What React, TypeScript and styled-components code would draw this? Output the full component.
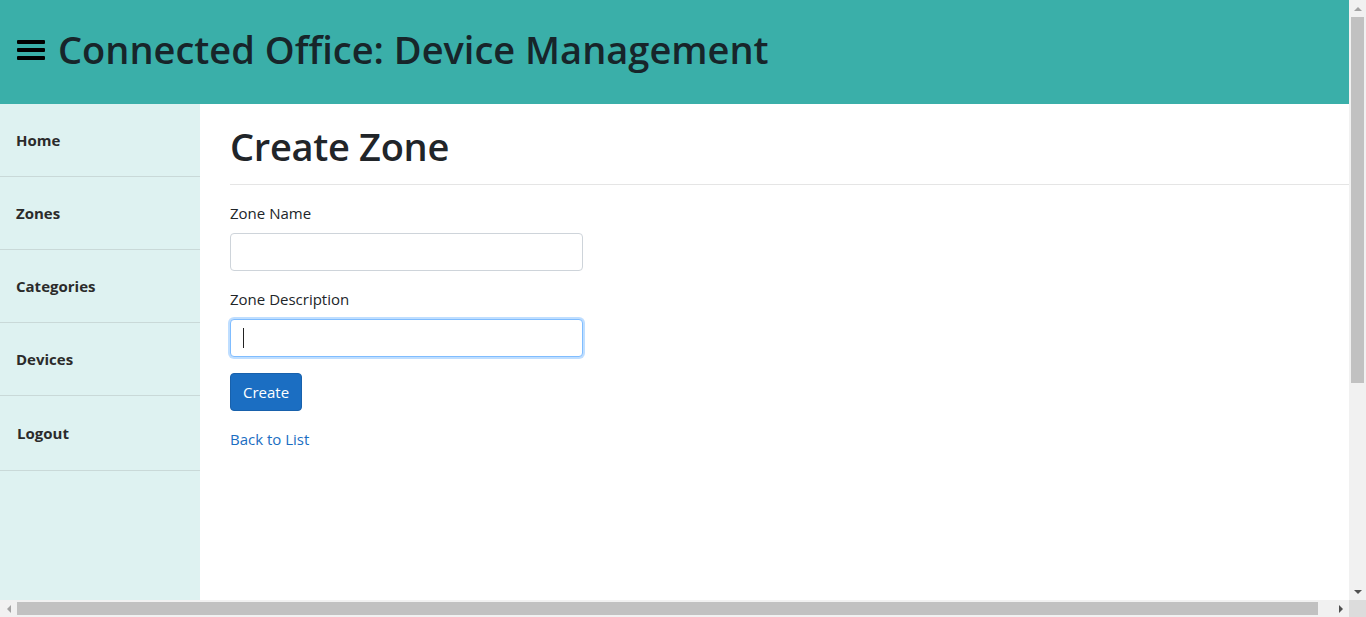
import React from 'react';
import styled, { createGlobalStyle } from 'styled-components';

const GlobalStyle = createGlobalStyle`
  html, body { margin: 0; padding: 0; overflow: hidden; }
  body {
    font-family: "Open Sans", "Noto Sans", "Liberation Sans", sans-serif;
    color: #212529;
    background: #ffffff;
  }
  * { box-sizing: border-box; }
`;

/* ---------- window frame with scrollbars ---------- */

const Viewport = styled.div`
  width: 1366px;
  height: 617px;
  display: grid;
  grid-template-columns: 1349px 17px;
  grid-template-rows: 600px 17px;
  background: #f1f1f1;
`;

const Scroller = styled.div`
  overflow: hidden;
  background: #fff;
`;

const VBar = styled.div`
  display: flex;
  flex-direction: column;
  background: #f1f1f1;
`;

const HBar = styled.div`
  display: flex;
  background: #f1f1f1;
`;

const Corner = styled.div`
  background: #dcdcdc;
`;

const ArrowButton = styled.div`
  width: 17px;
  height: 17px;
  flex-shrink: 0;
  display: flex;
  align-items: center;
  justify-content: center;
`;

type Dir = 'up' | 'down' | 'left' | 'right';

const Tri = styled.span<{ $dir: Dir; $active?: boolean }>`
  width: 0;
  height: 0;
  border-style: solid;
  ${(p) => {
    const c = p.$active ? '#505050' : '#a3a3a3';
    switch (p.$dir) {
      case 'up':
        return `border-width: 0 4px 4px 4px; border-color: transparent transparent ${c} transparent;`;
      case 'down':
        return `border-width: 4px 4px 0 4px; border-color: ${c} transparent transparent transparent;`;
      case 'left':
        return `border-width: 4px 4px 4px 0; border-color: transparent ${c} transparent transparent;`;
      default:
        return `border-width: 4px 0 4px 4px; border-color: transparent transparent transparent ${c};`;
    }
  }}
`;

const VTrack = styled.div`
  flex: 1;
  padding: 0 2px;
`;

const HTrack = styled.div`
  flex: 1;
  padding: 2px 0;
`;

const Thumb = styled.div`
  background: #c1c1c1;
  width: 100%;
  height: 100%;
`;

/* ---------- page ---------- */

const Page = styled.div`
  width: 1364px;
  min-height: 923px;
  display: flex;
  flex-direction: column;
`;

const Header = styled.header`
  height: 104px;
  background: #3aafa9;
  display: flex;
  align-items: center;
  padding: 0 0 4px 17px;
  gap: 13px;
`;

const Burger = styled.button`
  width: 28px;
  height: 20px;
  padding: 0;
  border: 0;
  background: transparent;
  display: flex;
  flex-direction: column;
  justify-content: space-between;
  cursor: pointer;
  span {
    display: block;
    height: 4px;
    border-radius: 1px;
    background: #000;
  }
`;

const Title = styled.h1`
  margin: 0;
  font-size: 38px;
  font-weight: 600;
  line-height: 1.2;
  color: #17252a;
  letter-spacing: 0;
`;

const Body = styled.div`
  flex: 1;
  display: flex;
`;

const Sidebar = styled.nav`
  width: 200px;
  flex-shrink: 0;
  background: #def2f1;
  display: flex;
  flex-direction: column;
`;

const NavItem = styled.a<{ $tall?: boolean; $indent?: number }>`
  display: flex;
  align-items: center;
  height: ${(p) => (p.$tall ? 75 : 73)}px;
  padding-left: ${(p) => p.$indent ?? 16}px;
  border-bottom: 1px solid #c9d9d8;
  font-size: 15px;
  font-weight: 700;
  color: #2b2b2b;
  text-decoration: none;
  cursor: pointer;
`;

const Main = styled.main`
  flex: 1;
  padding: 18px 0 0 30px;
`;

const PageTitle = styled.h2`
  margin: 0;
  font-size: 38px;
  font-weight: 600;
  line-height: 48px;
  color: #212529;
  letter-spacing: -0.3px;
`;

const Rule = styled.hr`
  margin: 14px 0 16px;
  border: 0;
  border-top: 1px solid #e5e5e5;
`;

const Field = styled.div`
  margin-bottom: 16px;
`;

const Label = styled.label`
  display: block;
  font-size: 15px;
  line-height: 24px;
  margin-bottom: 8px;
`;

const InputWrap = styled.div`
  position: relative;
  width: 353px;
`;

const Input = styled.input<{ $focused?: boolean }>`
  display: block;
  width: 353px;
  height: 38px;
  padding: 6px 12px;
  font: inherit;
  font-size: 16px;
  color: #495057;
  background: #fff;
  border: 1px solid ${(p) => (p.$focused ? '#80bdff' : '#ced4da')};
  border-radius: 4px;
  outline: none;
  box-shadow: ${(p) => (p.$focused ? '0 0 0 2px rgba(0, 123, 255, 0.25)' : 'none')};
`;

const Caret = styled.span`
  position: absolute;
  left: 13px;
  top: 9px;
  width: 1px;
  height: 20px;
  background: #222;
`;

const Button = styled.button`
  height: 38px;
  padding: 0 12px;
  font: inherit;
  font-size: 15px;
  color: #fff;
  background: #1b6ec2;
  border: 1px solid #1861ac;
  border-radius: 4px;
  cursor: pointer;
`;

const BackLink = styled.a`
  display: inline-block;
  font-size: 15px;
  line-height: 24px;
  color: #1b6ec2;
  text-decoration: none;
  cursor: pointer;
`;

export default function App() {
  return (
    <>
      <GlobalStyle />
      <Viewport>
        <Scroller>
          <Page>
            <Header>
              <Burger aria-label="Menu">
                <span />
                <span />
                <span />
              </Burger>
              <Title>Connected Office: Device Management</Title>
            </Header>
            <Body>
              <Sidebar>
                <NavItem>Home</NavItem>
                <NavItem>Zones</NavItem>
                <NavItem>Categories</NavItem>
                <NavItem>Devices</NavItem>
                <NavItem $tall $indent={17}>
                  Logout
                </NavItem>
              </Sidebar>
              <Main>
                <PageTitle>Create Zone</PageTitle>
                <Rule />
                <Field>
                  <Label htmlFor="zn">Zone Name</Label>
                  <Input id="zn" type="text" />
                </Field>
                <Field>
                  <Label htmlFor="zd">Zone Description</Label>
                  <InputWrap>
                    <Input id="zd" type="text" $focused />
                    <Caret />
                  </InputWrap>
                </Field>
                <Field>
                  <Button type="button">Create</Button>
                </Field>
                <BackLink>Back to List</BackLink>
              </Main>
            </Body>
          </Page>
        </Scroller>
        <VBar>
          <ArrowButton>
            <Tri $dir="up" />
          </ArrowButton>
          <VTrack>
            <Thumb style={{ height: 366 }} />
          </VTrack>
          <ArrowButton>
            <Tri $dir="down" $active />
          </ArrowButton>
        </VBar>
        <HBar>
          <ArrowButton>
            <Tri $dir="left" />
          </ArrowButton>
          <HTrack>
            <Thumb style={{ width: 1301 }} />
          </HTrack>
          <ArrowButton>
            <Tri $dir="right" $active />
          </ArrowButton>
        </HBar>
        <Corner />
      </Viewport>
    </>
  );
}
